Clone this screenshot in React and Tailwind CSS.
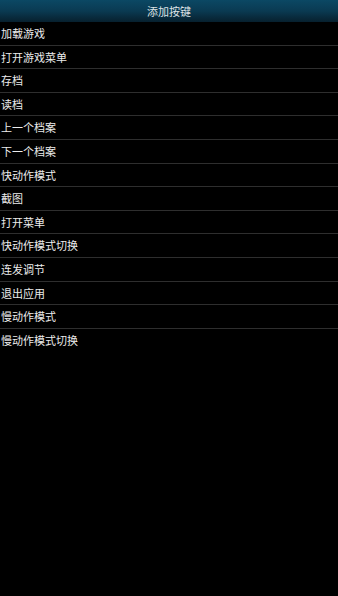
const ITEMS = [
  '加载游戏',
  '打开游戏菜单',
  '存档',
  '读档',
  '上一个档案',
  '下一个档案',
  '快动作模式',
  '截图',
  '打开菜单',
  '快动作模式切换',
  '连发调节',
  '退出应用',
  '慢动作模式',
  '慢动作模式切换',
]

export default function App() {
  return (
    <div
      className="min-h-[596px] w-full bg-black"
      style={{ fontFamily: '"Noto Sans CJK SC", "Liberation Sans", sans-serif' }}
    >
      {/* ── Title bar ── */}
      <div className="flex h-[22px] items-center justify-center bg-gradient-to-b from-[#0b4864] via-[#0a3a52] to-[#07202e]">
        <span className="text-[11px] leading-none text-[#dde2e5]">添加按键</span>
      </div>

      {/* ── Key list ── */}
      <ul>
        {ITEMS.map((label, i) => (
          <li
            key={label}
            className={
              i < ITEMS.length - 1
                ? 'flex h-[23.6px] items-center border-b border-[#2e2e2e] pl-[1px] text-[11px] text-[#ececec]'
                : 'flex h-[23.6px] items-center pl-[1px] text-[11px] text-[#ececec]'
            }
          >
            {label}
          </li>
        ))}
      </ul>
    </div>
  )
}
